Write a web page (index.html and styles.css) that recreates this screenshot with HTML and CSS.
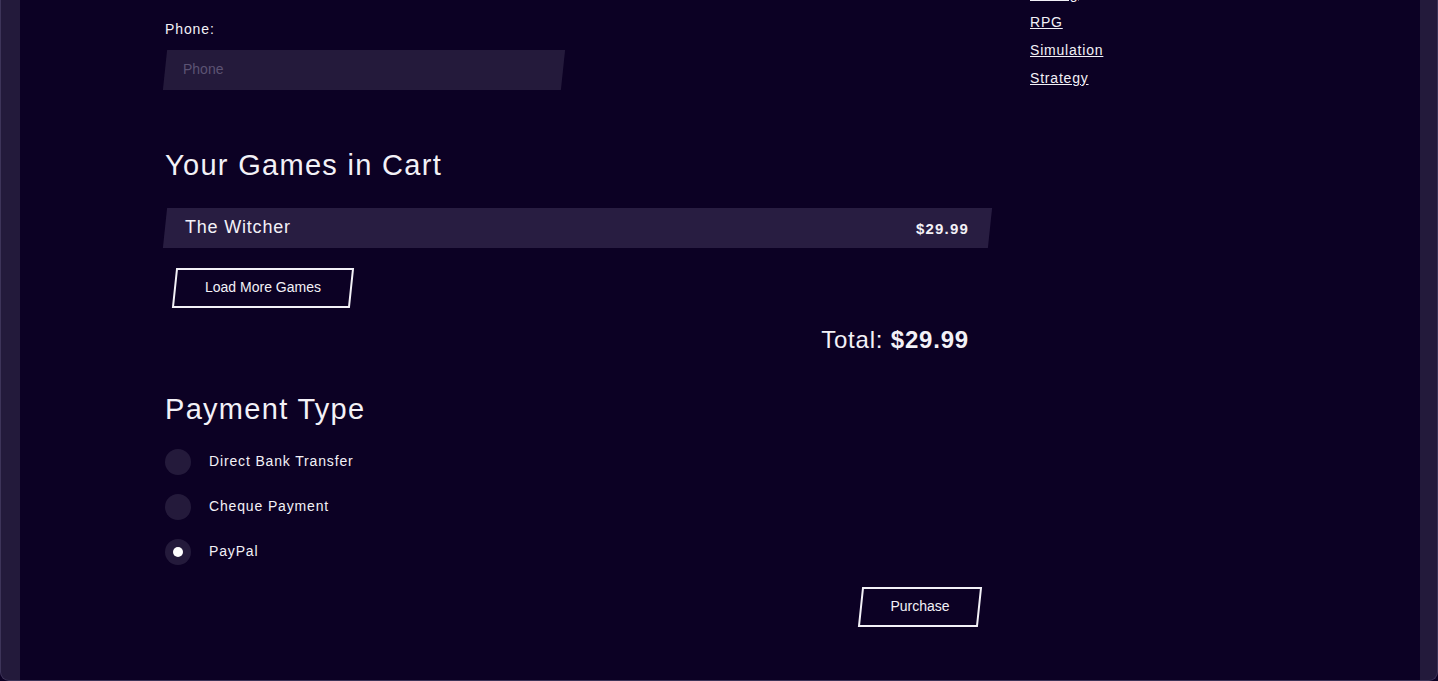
FILE: index.html
```html
<!DOCTYPE html>
<html lang="en">
<head>
<meta charset="utf-8">
<title>Checkout</title>
<link rel="stylesheet" href="styles.css">
</head>
<body>
<div class="frame">
  <div class="screen">
    <main class="checkout">
      <div class="field">
        <label class="field-label" for="phone">Phone:</label>
        <div class="skew-input">
          <input id="phone" type="text" placeholder="Phone">
        </div>
      </div>

      <h2 class="section-title cart-title">Your Games in Cart</h2>
      <div class="cart-row">
        <span class="cart-name">The Witcher</span>
        <span class="cart-price">$29.99</span>
      </div>
      <button class="skew-btn load-btn" type="button"><span>Load More Games</span></button>
      <div class="total">Total: <strong>$29.99</strong></div>

      <h2 class="section-title pay-title">Payment Type</h2>
      <div class="radios">
        <label class="radio"><span class="dot"></span><span class="radio-text">Direct Bank Transfer</span></label>
        <label class="radio"><span class="dot"></span><span class="radio-text">Cheque Payment</span></label>
        <label class="radio checked"><span class="dot"></span><span class="radio-text">PayPal</span></label>
      </div>
      <div class="actions">
        <button class="skew-btn purchase-btn" type="button"><span>Purchase</span></button>
      </div>
    </main>
    <aside class="sidebar">
      <a href="#">Racing</a>
      <a href="#">RPG</a>
      <a href="#">Simulation</a>
      <a href="#">Strategy</a>
    </aside>
  </div>
</div>
</body>
</html>
```

FILE: styles.css
```css
html, body {
  margin: 0;
  padding: 0;
  background: #0c0124;
  height: 681px;
  overflow: hidden;
}

body {
  font-family: "Liberation Sans", Arial, Helvetica, sans-serif;
  color: #f3f1f7;
}

.frame {
  box-sizing: border-box;
  height: 681px;
  background: #231a3b;
  border: 1px solid #3d3459;
  border-top: none;
  border-radius: 0 0 9px 9px;
  padding: 0 17px 0 19px;
}

.screen {
  height: 100%;
  background: #0c0124;
  display: flex;
  padding-left: 145px;
  gap: 40px;
  overflow: hidden;
}

.checkout {
  width: 825px;
  flex-shrink: 0;
  display: flex;
  flex-direction: column;
  align-items: flex-start;
}

.field {
  margin-top: 19px;
}

.field-label {
  display: block;
  font-size: 14px;
  line-height: 20px;
  letter-spacing: 0.9px;
  margin-bottom: 11px;
}

.skew-input {
  position: relative;
  width: 398px;
  height: 40px;
}

.skew-input::before {
  content: "";
  position: absolute;
  inset: 0;
  background: #241a3b;
  transform: skewX(-6deg);
}

.skew-input input {
  position: relative;
  box-sizing: border-box;
  width: 100%;
  height: 100%;
  border: none;
  background: transparent;
  padding: 0 18px 2px;
  font-family: inherit;
  font-size: 14px;
  color: #f3f1f7;
  outline: none;
}

.skew-input input::placeholder {
  color: #5c5373;
}

.section-title {
  font-weight: normal;
  font-size: 29px;
  line-height: 34px;
  letter-spacing: 1.3px;
  margin: 0;
}

.cart-title {
  margin-top: 58px;
}

.cart-row {
  position: relative;
  box-sizing: border-box;
  width: 825px;
  height: 40px;
  display: flex;
  align-items: center;
  justify-content: space-between;
  padding: 0 21px 0 20px;
  margin-top: 26px;
}

.cart-row::before {
  content: "";
  position: absolute;
  inset: 0;
  background: #281d41;
  transform: skewX(-6deg);
}

.cart-name {
  position: relative;
  font-size: 18px;
  letter-spacing: 0.8px;
  padding-bottom: 2px;
}

.cart-price {
  position: relative;
  font-size: 15px;
  font-weight: bold;
  letter-spacing: 1.2px;
}

.skew-btn {
  position: relative;
  height: 40px;
  border: none;
  background: transparent;
  color: #f3f1f7;
  font-family: inherit;
  font-size: 14px;
  padding: 0 0 3px;
  cursor: pointer;
}

.skew-btn::before {
  content: "";
  position: absolute;
  inset: 0;
  border: 2px solid #f3f1f7;
  transform: skewX(-6deg);
}

.skew-btn span {
  position: relative;
}

.load-btn {
  width: 178px;
  margin-top: 20px;
  margin-left: 9px;
}

.total {
  align-self: flex-end;
  margin-top: 18px;
  margin-right: 21px;
  font-size: 24px;
  line-height: 28px;
  letter-spacing: 0.8px;
}

.total strong {
  font-weight: bold;
}

.pay-title {
  margin-top: 38px;
}

.radios {
  display: flex;
  flex-direction: column;
  gap: 19px;
  margin-top: 23px;
}

.radio {
  display: flex;
  align-items: center;
  gap: 18px;
  font-size: 14px;
  letter-spacing: 0.85px;
  cursor: pointer;
}

.radio-text {
  padding-bottom: 2px;
}

.dot {
  width: 26px;
  height: 26px;
  border-radius: 50%;
  background: #241a3b;
  display: flex;
  align-items: center;
  justify-content: center;
}

.radio.checked .dot::after {
  content: "";
  width: 10px;
  height: 10px;
  border-radius: 50%;
  background: #ffffff;
}

.actions {
  align-self: stretch;
  display: flex;
  justify-content: flex-end;
  margin-top: 22px;
}

.purchase-btn {
  width: 120px;
  margin-right: 10px;
}

.sidebar {
  display: flex;
  flex-direction: column;
  margin-top: -20px;
}

.sidebar a {
  color: #f3f1f7;
  font-size: 14px;
  line-height: 28px;
  letter-spacing: 0.8px;
  text-decoration: underline;
}
```
